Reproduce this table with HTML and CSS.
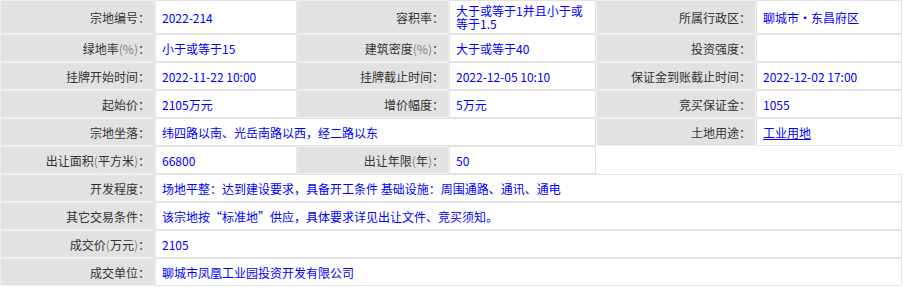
FILE: index.html
```html
<!DOCTYPE html>
<html lang="zh-CN">
<head>
<meta charset="utf-8">
<title>宗地信息</title>
<link rel="stylesheet" href="styles.css">
</head>
<body>
<table class="info">
  <colgroup>
    <col class="c1"><col class="c2"><col class="c3"><col class="c4"><col class="c5"><col class="c6">
  </colgroup>
  <tr>
    <td class="lb">宗地编号：</td><td class="vl">2022-214</td>
    <td class="lb">容积率：</td><td class="vl">大于或等于1并且小于或等于1.5</td>
    <td class="lb">所属行政区：</td><td class="vl">聊城市·东昌府区</td>
  </tr>
  <tr>
    <td class="lb">绿地率<span class="unit">(%)</span>：</td><td class="vl">小于或等于15</td>
    <td class="lb">建筑密度<span class="unit">(%)</span>：</td><td class="vl">大于或等于40</td>
    <td class="lb">投资强度：</td><td class="vl"></td>
  </tr>
  <tr>
    <td class="lb">挂牌开始时间：</td><td class="vl">2022-11-22 10:00</td>
    <td class="lb">挂牌截止时间：</td><td class="vl">2022-12-05 10:10</td>
    <td class="lb">保证金到账截止时间：</td><td class="vl">2022-12-02 17:00</td>
  </tr>
  <tr>
    <td class="lb">起始价：</td><td class="vl">2105万元</td>
    <td class="lb">增价幅度：</td><td class="vl">5万元</td>
    <td class="lb">竞买保证金：</td><td class="vl">1055</td>
  </tr>
  <tr>
    <td class="lb">宗地坐落：</td><td class="vl" colspan="3">纬四路以南、光岳南路以西，经二路以东</td>
    <td class="lb">土地用途：</td><td class="vl"><a class="link" href="#">工业用地</a></td>
  </tr>
  <tr>
    <td class="lb">出让面积<span class="unit">(</span>平方米<span class="unit">)</span>：</td><td class="vl">66800</td>
    <td class="lb">出让年限<span class="unit">(</span>年<span class="unit">)</span>：</td><td class="vl">50</td>
  </tr>
  <tr>
    <td class="lb">开发程度：</td><td class="vl" colspan="5">场地平整：达到建设要求，具备开工条件 基础设施：周围通路、通讯、通电</td>
  </tr>
  <tr>
    <td class="lb">其它交易条件：</td><td class="vl" colspan="5">该宗地按“标准地”供应，具体要求详见出让文件、竞买须知。</td>
  </tr>
  <tr>
    <td class="lb">成交价<span class="unit">(</span>万元<span class="unit">)</span>：</td><td class="vl" colspan="5">2105</td>
  </tr>
  <tr>
    <td class="lb">成交单位：</td><td class="vl" colspan="5">聊城市凤凰工业园投资开发有限公司</td>
  </tr>
</table>
</body>
</html>
```

FILE: styles.css
```css
html, body {
  margin: 0;
  padding: 0;
  background: #ffffff;
}

body {
  font-family: "Noto Sans CJK SC", "Noto Sans", sans-serif;
  font-size: 12px;
}

.info {
  width: 902px;
  table-layout: fixed;
  border-collapse: separate;
  border-spacing: 0;
}

.c1 { width: 155px; }
.c2 { width: 142px; }
.c3 { width: 152px; }
.c4 { width: 147px; }
.c5 { width: 160px; }
.c6 { width: 146px; }

.info td {
  height: 20px;
  line-height: 13px;
  padding: 3px 6px;
  vertical-align: middle;
  box-sizing: content-box;
}

.lb {
  background: #e2e2e2;
  border: 1px solid #efefef;
  color: #333333;
  text-align: right;
  padding-right: 4px !important;
  white-space: nowrap;
}

.vl {
  background: #ffffff;
  border: 1px solid #e3e3e3;
  color: #0000ff;
  text-align: left;
}

.unit {
  color: #8a7f72;
}

.link {
  color: #0000ff;
  text-decoration: underline;
}
```
